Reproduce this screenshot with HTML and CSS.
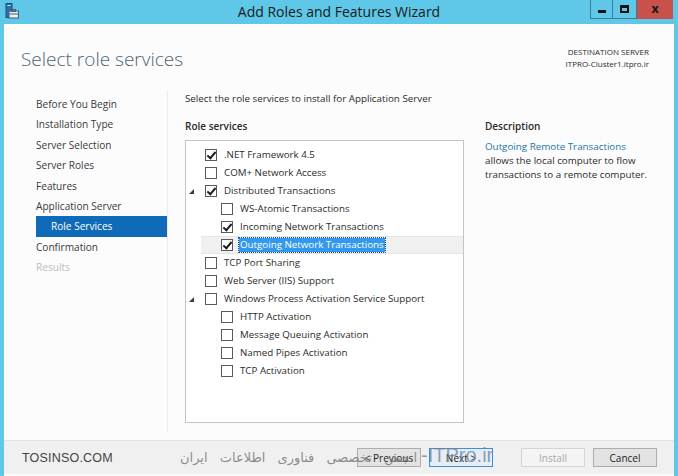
FILE: index.html
```html
<!DOCTYPE html>
<html>
<head>
<meta charset="utf-8">
<link rel="stylesheet" href="styles.css">
</head>
<body>
<div class="window">
  <div class="titlebar">
    <svg class="appicon" width="14" height="16" viewBox="0 0 14 16">
      <rect x="1" y="0.5" width="6" height="14" fill="#2f6fa8" stroke="#1d4f7e" stroke-width="1"/>
      <rect x="2.5" y="2" width="3" height="1" fill="#cfe6f7"/>
      <rect x="4" y="8" width="9.5" height="7" fill="#e8eef2" stroke="#3d5f7a" stroke-width="1"/>
      <rect x="6.5" y="6.5" width="4" height="2" fill="none" stroke="#3d5f7a" stroke-width="1"/>
      <rect x="4.5" y="10.5" width="9" height="1" fill="#3d5f7a"/>
    </svg>
    <div class="title">Add Roles and Features Wizard</div>
    <div class="controls">
      <div class="ctl min"><span class="minbar"></span></div>
      <div class="ctl max"><span class="maxbox"></span></div>
      <div class="ctl close">x</div>
    </div>
  </div>
  <div class="frame">
    <div class="header">
      <div class="heading">Select role services</div>
      <div class="dest">
        <div>DESTINATION SERVER</div>
        <div>ITPRO-Cluster1.itpro.ir</div>
      </div>
    </div>
    <div class="main">
      <nav class="nav">
        <div class="navitem">Before You Begin</div>
        <div class="navitem">Installation Type</div>
        <div class="navitem">Server Selection</div>
        <div class="navitem">Server Roles</div>
        <div class="navitem">Features</div>
        <div class="navitem">Application Server</div>
        <div class="navitem sub active">Role Services</div>
        <div class="navitem">Confirmation</div>
        <div class="navitem disabled">Results</div>
      </nav>
      <div class="sep"></div>
      <div class="content">
        <div class="intro">Select the role services to install for Application Server</div>
        <div class="columns">
          <div class="left">
            <div class="label">Role services</div>
            <div class="listbox">
              <div class="row l0"><span class="exp"></span><span class="cb checked"></span><span class="txt">.NET Framework 4.5</span></div>
              <div class="row l0"><span class="exp"></span><span class="cb"></span><span class="txt">COM+ Network Access</span></div>
              <div class="row l0"><span class="exp tri"></span><span class="cb checked"></span><span class="txt">Distributed Transactions</span></div>
              <div class="row l1"><span class="cb"></span><span class="txt">WS-Atomic Transactions</span></div>
              <div class="row l1"><span class="cb checked"></span><span class="txt">Incoming Network Transactions</span></div>
              <div class="row l1 selected"><span class="cb checked"></span><span class="txt hl">Outgoing Network Transactions</span></div>
              <div class="row l0"><span class="exp"></span><span class="cb"></span><span class="txt">TCP Port Sharing</span></div>
              <div class="row l0"><span class="exp"></span><span class="cb"></span><span class="txt">Web Server (IIS) Support</span></div>
              <div class="row l0"><span class="exp tri"></span><span class="cb"></span><span class="txt">Windows Process Activation Service Support</span></div>
              <div class="row l1"><span class="cb"></span><span class="txt">HTTP Activation</span></div>
              <div class="row l1"><span class="cb"></span><span class="txt">Message Queuing Activation</span></div>
              <div class="row l1"><span class="cb"></span><span class="txt">Named Pipes Activation</span></div>
              <div class="row l1"><span class="cb"></span><span class="txt">TCP Activation</span></div>
            </div>
          </div>
          <div class="desc">
            <div class="label">Description</div>
            <div class="desctext"><span class="link">Outgoing Remote Transactions</span><br>allows the local computer to flow transactions to a remote computer.</div>
          </div>
        </div>
      </div>
    </div>
    <div class="bottombar">
      <div class="wm1">TOSINSO.COM</div>
      <div class="wm2"><span class="fa">انجمن تخصصی فناوری اطلاعات ایران</span><span class="itp">-ITPro.ir</span></div>
      <div class="buttons">
        <div class="btn">&lt; Previous</div>
        <div class="btn focus">Next &gt;</div>
        <div class="btn disabledbtn gap">Install</div>
        <div class="btn">Cancel</div>
      </div>
    </div>
  </div>
</div>
</body>
</html>
```

FILE: styles.css
```css
* { box-sizing: border-box; }
html, body { margin: 0; padding: 0; }
body {
  width: 678px;
  height: 476px;
  overflow: hidden;
  background: #5fc7e7;
  font-family: "Open Sans", "Noto Sans", sans-serif;
  font-size: 10px;
  color: #2b2b2b;
}
.window {
  width: 678px;
  height: 476px;
  display: flex;
  flex-direction: column;
}
.titlebar {
  height: 24px;
  flex: none;
  display: flex;
  align-items: flex-start;
  position: relative;
}
.appicon { margin: 3px 0 0 5px; }
.title {
  position: absolute;
  left: 0; right: 0; top: 3px;
  text-align: center;
  font-size: 14px;
  color: #1a1a1a;
  line-height: 18px;
}
.controls {
  margin-left: auto;
  margin-right: 5px;
  display: flex;
  position: relative;
}
.ctl {
  height: 19px;
  display: flex;
  align-items: center;
  justify-content: center;
  border: 1px solid #3a7c96;
  border-top: none;
}
.ctl.min { width: 23px; }
.ctl.max { width: 24px; border-left: none; }
.ctl.close {
  width: 36px;
  background: #c8514b;
  border: none;
  color: #1a1a1a;
  font-weight: bold;
  font-size: 12px;
  font-family: "DejaVu Sans", sans-serif;
  padding-bottom: 2px;
}
.minbar { width: 8px; height: 3px; background: #111; margin-top: 4px; }
.maxbox { width: 9px; height: 8px; border: 2px solid #111; border-top-width: 3px; }
.frame {
  flex: 1;
  margin: 0 4px 0 4px;
  background: #fcfcfd;
  display: flex;
  flex-direction: column;
  min-height: 0;
}
.header {
  height: 66px;
  flex: none;
  display: flex;
  justify-content: space-between;
  align-items: flex-start;
}
.heading {
  margin: 23px 0 0 17px;
  font-size: 19px;
  font-weight: 300;
  color: #4f6473;
  line-height: 24px;
}
.dest {
  margin: 22px 25px 0 0;
  text-align: right;
  font-size: 8px;
  line-height: 12px;
  color: #2a2a2a;
}
.main {
  flex: 1;
  display: flex;
  min-height: 0;
}
.nav {
  margin-left: 32px;
  width: 131px;
  padding-top: 4px;
  flex: none;
}
.navitem {
  height: 20.4px;
  line-height: 20.4px;
  font-size: 10.1px;
  color: #3a3a3a;
  white-space: nowrap;
}
.navitem.sub { padding-left: 15px; }
.navitem.active { background: #0f6ab8; color: #fff; }
.navitem.disabled { color: #bdbdbd; }
.sep {
  width: 1px;
  background: #ececec;
  margin-bottom: 8px;
  flex: none;
}
.content {
  padding-left: 17px;
  flex: 1;
}
.intro {
  margin-top: 2px;
  line-height: 14px;
  font-size: 9.8px;
}
.columns {
  display: flex;
  margin-top: 13px;
}
.label {
  font-size: 10px;
  font-weight: 600;
  line-height: 14px;
  height: 21px;
  color: #2b2b2b;
}
.listbox {
  width: 279px;
  height: 283px;
  border: 1px solid #c4c4c4;
  background: #fff;
  padding-top: 5px;
}
.row {
  height: 18px;
  display: flex;
  align-items: center;
  font-size: 9.75px;
  white-space: nowrap;
}
.row.l0 { padding-left: 3px; }
.row.l1 { padding-left: 35px; }
.exp { width: 16px; height: 18px; flex: none; position: relative; }
.exp.tri::after {
  content: "";
  position: absolute;
  left: 0px; top: 7px;
  width: 0; height: 0;
  border-left: 5px solid transparent;
  border-bottom: 5px solid #3c3c3c;
}
.cb {
  width: 12px;
  height: 12px;
  border: 1px solid #5a5a5a;
  background: #fff;
  flex: none;
  position: relative;
}
.cb.checked::after {
  content: "";
  position: absolute;
  left: 3px; top: 0px;
  width: 3px; height: 7px;
  border-right: 2px solid #1e1e1e;
  border-bottom: 2px solid #1e1e1e;
  transform: rotate(40deg);
}
.txt { margin-left: 6px; line-height: 14px; padding: 0 1px; }
.row.selected {
  background: #f0f0f0;
  margin-left: 15px;
  padding-left: 20px;
  border-top: 1px solid #e6e6e6;
  border-bottom: 1px solid #e6e6e6;
}
.txt.hl {
  background: #3399ee;
  color: #fff;
  outline: 1px dotted #1c4f86;
}
.desc { margin-left: 21px; }
.desctext {
  font-size: 9.8px;
  line-height: 14px;
  width: 180px;
}
.link { color: #1c74a8; }
.bottombar {
  height: 34px;
  margin-top: auto;
  margin-bottom: 2px;
  background: #f0f0f0;
  border-top: 1px solid #e2e2e2;
  display: flex;
  align-items: center;
  position: relative;
  flex: none;
}
.wm1 {
  position: absolute;
  left: 18px; top: 10px;
  font-family: "Liberation Sans", sans-serif;
  font-size: 12.5px;
  color: #444;
  letter-spacing: 0.2px;
}
.wm2 {
  position: absolute;
  left: 176px; top: 3px;
  white-space: nowrap;
  color: rgba(120, 120, 120, 0.85);
  z-index: 2;
  direction: ltr;
  display: flex;
  align-items: baseline;
}
.wm2 .fa {
  font-family: "DejaVu Sans", sans-serif;
  font-size: 13px;
  word-spacing: 8px;
}
.wm2 .itp {
  font-family: "Liberation Sans", sans-serif;
  font-size: 20px;
  margin-left: 4px;
  color: rgba(110, 130, 150, 0.75);
}
.buttons {
  margin-left: auto;
  margin-right: 17px;
  display: flex;
  gap: 8px;
}
.btn {
  width: 64px;
  height: 19px;
  background: #e3e3e3;
  border: 1px solid #adadad;
  font-size: 10px;
  display: flex;
  align-items: center;
  justify-content: center;
  color: #222;
}
.btn.focus { border-color: #3c8fd8; background: #e5eef7; }
.btn.gap { margin-left: 20px; }
.btn.disabledbtn { background: #f4f4f4; border-color: #d5d5d5; color: #a8a8a8; }
```
